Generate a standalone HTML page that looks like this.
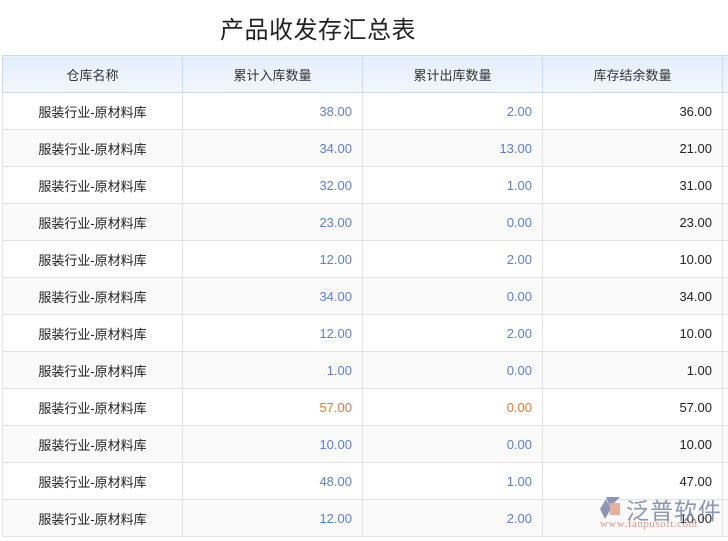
<!DOCTYPE html>
<html><head><meta charset="utf-8"><style>
*{margin:0;padding:0;box-sizing:border-box}
body{width:728px;height:541px;overflow:hidden;background:#fff;font-family:"Liberation Sans","Noto Sans CJK SC",sans-serif;position:relative}
.title{position:absolute;top:10px;left:0;width:636px;text-align:center;font-size:24px;color:#222;letter-spacing:0.5px}
table{position:absolute;top:55px;left:2px;width:740px;border-collapse:collapse;table-layout:fixed}
td,th{border:1px solid #e3e3e3;height:37px;font-size:13px;font-weight:normal;color:#222;padding:0 10px}
th{background:linear-gradient(#e4eefb,#f3f7fd);border-color:#c8dbee;color:#333}
tr:nth-child(odd) td{background:#fafafa}
td.n{text-align:right}
.b{color:#5a80dc}.o{color:#e8782a}
.wm{position:absolute;left:598px;top:494px;opacity:.85}
</style></head><body>
<div class="title">产品收发存汇总表</div>
<table>
<colgroup><col style="width:180px"><col style="width:180px"><col style="width:180px"><col style="width:180px"><col style="width:20px"></colgroup>
<tr><th>仓库名称</th><th>累计入库数量</th><th>累计出库数量</th><th>库存结余数量</th><th></th></tr>
<tr><td style="text-align:center">服装行业-原材料库</td><td class="n b">38.00</td><td class="n b">2.00</td><td class="n">36.00</td><td></td></tr>
<tr><td style="text-align:center">服装行业-原材料库</td><td class="n b">34.00</td><td class="n b">13.00</td><td class="n">21.00</td><td></td></tr>
<tr><td style="text-align:center">服装行业-原材料库</td><td class="n b">32.00</td><td class="n b">1.00</td><td class="n">31.00</td><td></td></tr>
<tr><td style="text-align:center">服装行业-原材料库</td><td class="n b">23.00</td><td class="n b">0.00</td><td class="n">23.00</td><td></td></tr>
<tr><td style="text-align:center">服装行业-原材料库</td><td class="n b">12.00</td><td class="n b">2.00</td><td class="n">10.00</td><td></td></tr>
<tr><td style="text-align:center">服装行业-原材料库</td><td class="n b">34.00</td><td class="n b">0.00</td><td class="n">34.00</td><td></td></tr>
<tr><td style="text-align:center">服装行业-原材料库</td><td class="n b">12.00</td><td class="n b">2.00</td><td class="n">10.00</td><td></td></tr>
<tr><td style="text-align:center">服装行业-原材料库</td><td class="n b">1.00</td><td class="n b">0.00</td><td class="n">1.00</td><td></td></tr>
<tr><td style="text-align:center">服装行业-原材料库</td><td class="n o">57.00</td><td class="n o">0.00</td><td class="n">57.00</td><td></td></tr>
<tr><td style="text-align:center">服装行业-原材料库</td><td class="n b">10.00</td><td class="n b">0.00</td><td class="n">10.00</td><td></td></tr>
<tr><td style="text-align:center">服装行业-原材料库</td><td class="n b">48.00</td><td class="n b">1.00</td><td class="n">47.00</td><td></td></tr>
<tr><td style="text-align:center">服装行业-原材料库</td><td class="n b">12.00</td><td class="n b">2.00</td><td class="n">10.00</td><td></td></tr>
</table>
<div class="wm">
<svg width="26" height="26" style="position:absolute;left:0;top:1px"><path d="M8 2h14l-10 10z" fill="#7a86a8"/><path d="M2 14l6-10 5 10-6 10z" fill="#7a86a8"/><path d="M12 8h10v12h-10z" fill="#e3a48a"/></svg>
<div style="position:absolute;left:28px;top:-2px;font-size:23px;color:#7a86a8;white-space:nowrap;letter-spacing:1px">泛普软件</div>
<div style="position:absolute;left:2px;top:24px;font-size:11px;color:#d98a70;font-family:'Liberation Serif',serif;white-space:nowrap;letter-spacing:0.5px">www.fanpusoft.com</div>
</div>
</body></html>
